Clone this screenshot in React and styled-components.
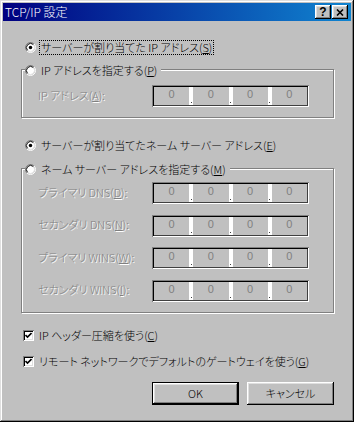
import React from "react";
import styled, { createGlobalStyle } from "styled-components";

const FONT = `"Noto Sans CJK JP", "Liberation Sans", sans-serif`;

const GlobalStyle = createGlobalStyle`
  html, body {
    margin: 0;
    padding: 0;
    background: #c0c0c0;
  }
  body {
    font-family: ${FONT};
    font-size: 11px;
    font-weight: 300;
    font-feature-settings: "palt";
  }
`;

const Window = styled.div`
  box-sizing: border-box;
  width: 354px;
  height: 422px;
  padding: 3px;
  background: #c0c0c0;
  box-shadow: inset -1px -1px 0 #000, inset 1px 1px 0 #dfdfdf,
    inset -2px -2px 0 #808080, inset 2px 2px 0 #fff;
  display: flex;
  flex-direction: column;
`;

const TitleBar = styled.div`
  height: 18px;
  display: flex;
  align-items: center;
  padding: 0 3px 0 2px;
  background: linear-gradient(90deg, #000080, #1084d0);
`;

const Title = styled.span`
  flex: 1;
  color: #fff;
  font-size: 12px;
  line-height: 18px;
`;

const CaptionButtons = styled.div`
  display: flex;
  gap: 1px;
`;

const CaptionButton = styled.div`
  width: 16px;
  height: 14px;
  box-sizing: border-box;
  display: flex;
  align-items: center;
  justify-content: center;
  background: #c0c0c0;
  box-shadow: inset -1px -1px 0 #000, inset 1px 1px 0 #fff,
    inset -2px -2px 0 #808080, inset 2px 2px 0 #dfdfdf;
  font-family: "Liberation Sans", sans-serif;
  font-weight: 700;
  font-size: 12px;
  line-height: 14px;
  color: #000;
`;

const Body = styled.div`
  flex: 1;
  display: flex;
  flex-direction: column;
  padding: 0 17px 0 18px;
`;

const OptionRow = styled.label`
  display: flex;
  align-items: center;
  gap: 4px;
  height: 16px;
  margin: ${(p) => p.$top || 0}px 0 0 ${(p) => (p.$indent ?? 4)}px;
  color: #000;
  white-space: nowrap;
`;

const Caption = styled.span`
  line-height: 13px;
  padding: 0 1px;
  outline: ${(p) => (p.$focus ? "1px dotted #000" : "none")};
  outline-offset: 0;
`;

const RadioSvg = styled.svg`
  width: 11px;
  height: 11px;
  flex: none;
`;

const Radio = ({ checked }) => (
  <RadioSvg viewBox="0 0 12 12">
    <circle cx="6" cy="6" r="4.5" fill="#fff" />
    <path d="M2.11 9.89 A5.5 5.5 0 0 1 9.89 2.11" stroke="#808080" fill="none" />
    <path d="M9.89 2.11 A5.5 5.5 0 0 1 2.11 9.89" stroke="#fff" fill="none" />
    <path d="M2.82 9.18 A4.5 4.5 0 0 1 9.18 2.82" stroke="#000" fill="none" />
    <path d="M9.18 2.82 A4.5 4.5 0 0 1 2.82 9.18" stroke="#dfdfdf" fill="none" />
    {checked && <circle cx="6" cy="6" r="1.9" fill="#000" />}
  </RadioSvg>
);

const CheckBox = styled.span`
  width: 11px;
  height: 11px;
  box-sizing: border-box;
  flex: none;
  display: flex;
  align-items: center;
  justify-content: center;
  background: #fff;
  box-shadow: inset 1px 1px 0 #808080, inset -1px -1px 0 #fff,
    inset 2px 2px 0 #000, inset -2px -2px 0 #dfdfdf;
`;

const Check = () => (
  <CheckBox>
    <svg width="7" height="7" viewBox="0 0 7 7">
      <path d="M0.5 3 L2.5 5 L6.5 1" stroke="#000" strokeWidth="1.6" fill="none" />
    </svg>
  </CheckBox>
);

const GroupBox = styled.div`
  display: flex;
  flex-direction: column;
  margin-top: ${(p) => p.$top}px;
  padding: 0 0 ${(p) => p.$bottom}px 16px;
  border: 1px solid #808080;
  box-shadow: inset 1px 1px 0 #fff, 1px 1px 0 #fff;
`;

const Legend = styled.label`
  display: flex;
  align-items: center;
  gap: 4px;
  height: 16px;
  width: fit-content;
  margin: -8px 0 0 -13px;
  padding: 0 3px 0 0;
  background: #c0c0c0;
  white-space: nowrap;
`;

const Rows = styled.div`
  display: flex;
  flex-direction: column;
  gap: 10.5px;
  margin-top: ${(p) => p.$top}px;
`;

const FieldRow = styled.div`
  display: grid;
  grid-template-columns: 114px 157px;
  align-items: center;
  height: 22px;
`;

const FieldLabel = styled.span`
  color: #808080;
  text-shadow: 1px 1px 0 #fff;
  white-space: nowrap;
  margin-top: -3px;
`;

const IpField = styled.div`
  box-sizing: border-box;
  height: 22px;
  display: flex;
  padding: 2px;
  background: #fff;
  box-shadow: inset 1px 1px 0 #808080, inset -1px -1px 0 #fff,
    inset 2px 2px 0 #000, inset -2px -2px 0 #404040;
`;

const IpSegment = styled.span`
  flex: 1;
  background: #c0c0c0;
  color: #808080;
  text-align: center;
  font-family: "Liberation Sans", sans-serif;
  font-size: 11px;
  line-height: 14px;
`;

const IpDot = styled.span`
  width: 4px;
  display: flex;
  align-items: flex-end;
  justify-content: center;
  padding-bottom: 2px;
  box-sizing: border-box;
  &::after {
    content: "";
    width: 1px;
    height: 1px;
    background: #404040;
  }
`;

const IpAddress = () => (
  <IpField>
    <IpSegment>0</IpSegment>
    <IpDot />
    <IpSegment>0</IpSegment>
    <IpDot />
    <IpSegment>0</IpSegment>
    <IpDot />
    <IpSegment>0</IpSegment>
  </IpField>
);

const ButtonBar = styled.div`
  display: flex;
  justify-content: flex-end;
  gap: 8px;
  margin-top: 12px;
`;

const Button = styled.button`
  width: 87px;
  height: 23px;
  padding: 0;
  border: ${(p) => (p.$default ? "1px solid #000" : "none")};
  background: #c0c0c0;
  box-shadow: inset -1px -1px 0 #000, inset 1px 1px 0 #fff,
    inset -2px -2px 0 #808080, inset 2px 2px 0 #dfdfdf;
  font-family: ${FONT};
  font-feature-settings: "palt";
  font-size: 11px;
  font-weight: 300;
  color: #000;
`;

const dnsRows = [
  ["プライマリ DNS", "D"],
  ["セカンダリ DNS", "N"],
  ["プライマリ WINS", "W"],
  ["セカンダリ WINS", "I"],
];

const App = () => (
  <>
    <GlobalStyle />
    <Window>
      <TitleBar>
        <Title>TCP/IP 設定</Title>
        <CaptionButtons>
          <CaptionButton>?</CaptionButton>
          <CaptionButton>
            <svg width="8" height="7" viewBox="0 0 8 7">
              <path d="M1 0.5 L7 6.5 M7 0.5 L1 6.5" stroke="#000" strokeWidth="1.6" />
            </svg>
          </CaptionButton>
        </CaptionButtons>
      </TitleBar>
      <Body>
        <OptionRow $top={18}>
          <Radio checked />
          <Caption $focus>
            サーバーが割り当てた IP アドレス(<u>S</u>)
          </Caption>
        </OptionRow>

        <GroupBox $top={14} $bottom={10}>
          <Legend>
            <Radio />
            <Caption>
              IP アドレスを指定する(<u>P</u>)
            </Caption>
          </Legend>
          <Rows $top={7}>
            <FieldRow>
              <FieldLabel>
                IP アドレス(<u>A</u>):
              </FieldLabel>
              <IpAddress />
            </FieldRow>
          </Rows>
        </GroupBox>

        <OptionRow $top={19}>
          <Radio checked />
          <Caption>
            サーバーが割り当てたネーム サーバー アドレス(<u>E</u>)
          </Caption>
        </OptionRow>

        <GroupBox $top={15} $bottom={10}>
          <Legend>
            <Radio />
            <Caption>
              ネーム サーバー アドレスを指定する(<u>M</u>)
            </Caption>
          </Legend>
          <Rows $top={5}>
            {dnsRows.map(([label, key]) => (
              <FieldRow key={key}>
                <FieldLabel>
                  {label}(<u>{key}</u>):
                </FieldLabel>
                <IpAddress />
              </FieldRow>
            ))}
          </Rows>
        </GroupBox>

        <OptionRow $top={15} $indent={2}>
          <Check />
          <Caption>
            IP ヘッダー圧縮を使う(<u>C</u>)
          </Caption>
        </OptionRow>
        <OptionRow $top={10} $indent={2}>
          <Check />
          <Caption>
            リモート ネットワークでデフォルトのゲートウェイを使う(<u>G</u>)
          </Caption>
        </OptionRow>

        <ButtonBar>
          <Button $default>OK</Button>
          <Button>キャンセル</Button>
        </ButtonBar>
      </Body>
    </Window>
  </>
);

export default App;
